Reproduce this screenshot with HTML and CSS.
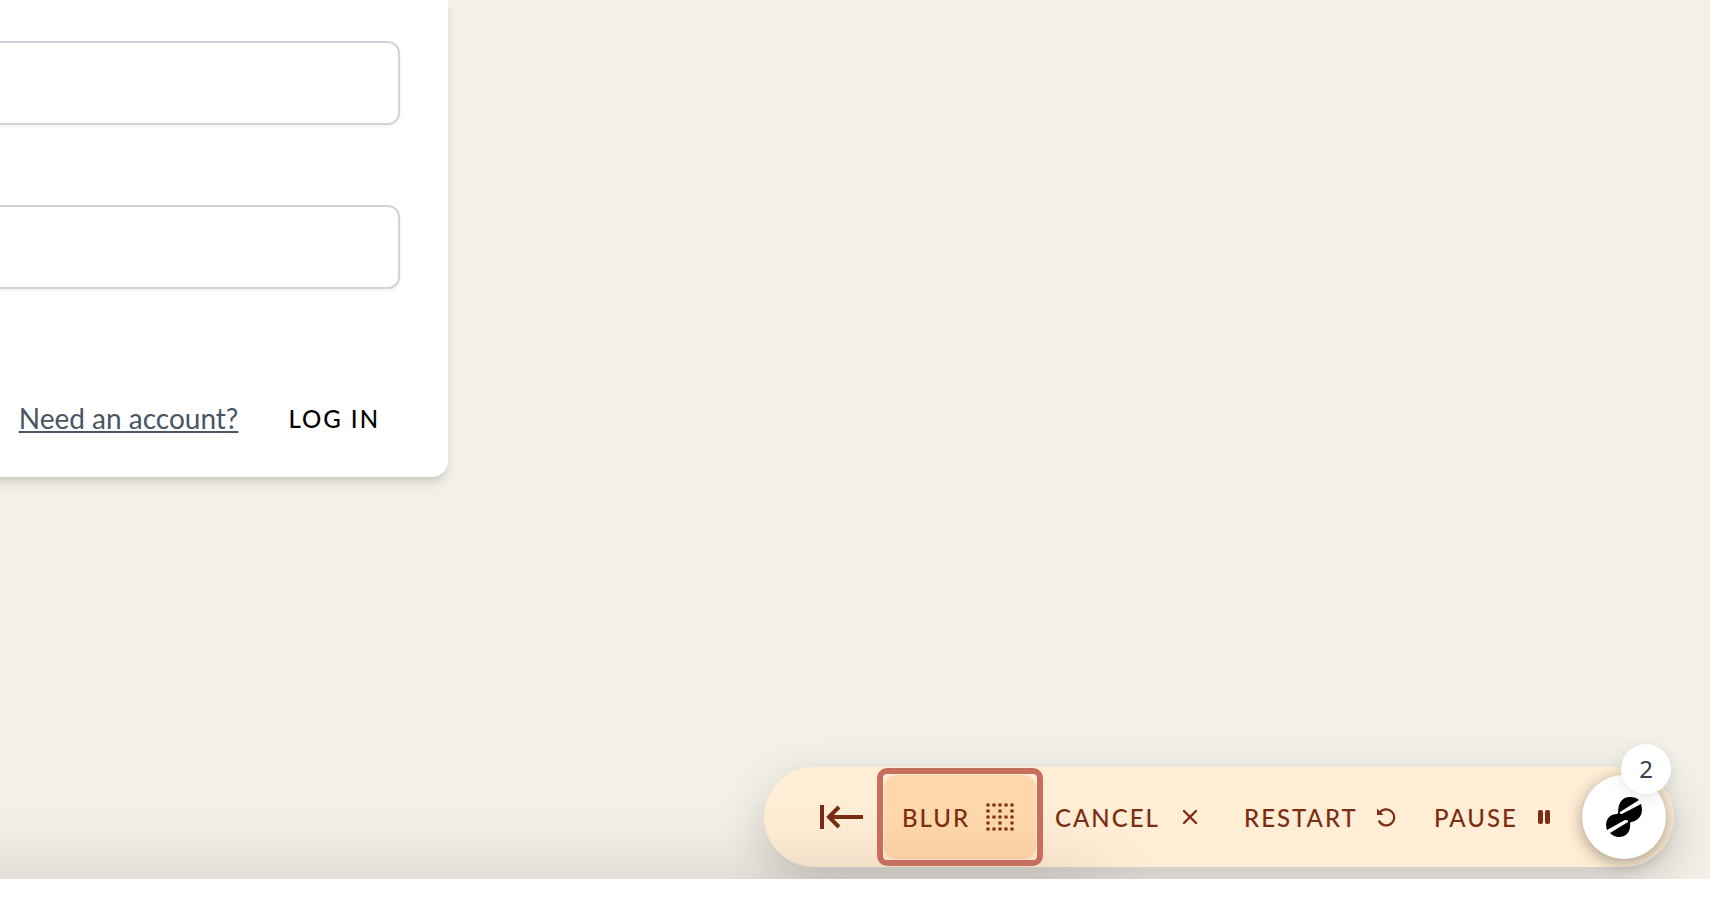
FILE: index.html
```
<!DOCTYPE html>
<html lang="en">
<head>
	<meta charset="UTF-8">
	<title>Log in</title>
	<link rel="stylesheet" href="styles.css">
</head>
<body>
<div class="stage">
	<main class="card">
		<form class="login">
			<input class="field" type="email" aria-label="Email">
			<input class="field" type="password" aria-label="Password">
			<div class="actions">
				<a class="need-account" href="#">Need an account?</a>
				<button class="log-in" type="button">LOG IN</button>
			</div>
		</form>
	</main>

	<div class="toolbar">
		<button class="tool collapse" type="button" aria-label="Collapse">
			<svg width="44" height="24" viewBox="0 0 44 24" fill="none" stroke="currentColor" stroke-width="4">
				<path d="M2 0v24M43 12H9M19 2L9 12l10 10"/>
			</svg>
		</button>
		<div class="highlight">
			<button class="tool blur" type="button">BLUR
				<svg width="28" height="28" viewBox="0 0 28 28" fill="none" stroke="currentColor" stroke-width="3.200">
					<path stroke-dasharray="3.200 2.800" d="M.400 2H28M.400 14H28M.400 26H28"/>
					<path d="M.400 8h3.200M12.400 8h3.200M24.400 8h3.200M.400 20h3.200M12.400 20h3.200M24.400 20h3.200"/>
				</svg>
			</button>
		</div>
		<button class="tool cancel" type="button">CANCEL
			<svg width="16" height="16" viewBox="0 0 16 16" fill="none" stroke="currentColor" stroke-width="2.400" stroke-linecap="round">
				<path d="M2 2l12 12M14 2L2 14"/>
			</svg>
		</button>
		<button class="tool restart" type="button">RESTART
			<svg width="20" height="20" viewBox="0 0 20 20" fill="none" stroke="currentColor" stroke-width="2.200">
				<path d="M3.500 6A8 8 0 1 1 2.800 13.500"/>
				<path d="M1 1.500V8h6.500z" fill="currentColor" stroke="none"/>
			</svg>
		</button>
		<button class="tool pause" type="button">PAUSE
			<svg width="12" height="14" viewBox="0 0 12 14" fill="currentColor">
				<rect width="5" height="14" rx="2"/><rect x="7" width="5" height="14" rx="2"/>
			</svg>
		</button>
		<button class="brand" type="button" aria-label="Recorder, 2 steps">
			<svg width="36" height="42" viewBox="0 0 36 42">
				<path d="M12 17C12 7 16 1 24 1C28 1 31 2 33 4L14 16Q13 18 16 18L35 8C38 17 34 24 25 26L24 27C25 36 20 41 13 41C9 41 6 39 4 37L22 26Q23 24 19 24L1 34C-2 25 3 18 11 18Z"/>
			</svg>
			<span class="count">2</span>
		</button>
	</div>
</div>
</body>
</html>
```
FILE: styles.css
```
* { box-sizing:border-box; }
body { margin:0; background:#fff; font-family:Lato, "Open Sans", sans-serif; }
button { border:0; background:none; padding:0; color:inherit; font:inherit; cursor:pointer; }

.stage {
	display:flex;
	flex-direction:column;
	justify-content:space-between;
	position:relative;
	min-height:calc(100vh - 23px);
	background:#f3f0e8;
	overflow:hidden;
}
/* soft shade along the bottom edge, falls over the toolbar too */
.stage:after {
	content:"";
	position:absolute;
	top:100%;
	left:-10%;
	right:36%;
	height:80px;
	box-shadow:0 0 80px rgba(0,0,0,.15);
	pointer-events:none;
}
.card {
	width:calc(26.2% + 24px);
	margin-left:-24px;
	padding:41px 48px 24px 0;
	background:#fff;
	border-radius:0 0 16px 16px;
	box-shadow:0 8px 12px -2px rgba(0,0,0,.1), 0 4px 8px -2px rgba(0,0,0,.08);
}
.login { display:flex; flex-direction:column; gap:80px; }
.field {
	width:100%;
	height:84px;
	padding:0 24px;
	border:2px solid #d1d5db;
	border-radius:12px;
	box-shadow:0 2px 4px rgba(0,0,0,.05);
	font-size:28px;
}
.actions { display:flex; align-items:center; justify-content:flex-end; gap:50px; height:84px; padding-top:14px; }
.need-account { color:#4b5563; font-size:28px; text-underline-offset:2px; }
.log-in { padding-right:20px; font-size:24px; font-weight:500; letter-spacing:2px; color:#000; }

.toolbar {
	display:flex;
	align-items:center;
	align-self:flex-end;
	height:100px;
	margin:0 36px 12px 0;
	padding:0 8px 0 56px;
	border-radius:50px;
	background:#ffedd5;
	color:#7c2d12;
	font-size:24px;
	font-weight:500;
	box-shadow:0 16px 48px rgba(0,0,0,.18);
}
.tool { display:flex; align-items:center; justify-content:space-between; height:84px; letter-spacing:2px; }
.collapse { margin-right:13px; }
.highlight { position:relative; z-index:1; padding:1px; border:6px solid #c76f5d; border-radius:10px; }
.blur { width:152px; padding:0 22px 0 18px; border-radius:12px; background:linear-gradient(#fed7aa 50%, #f6cea2); }
.cancel { width:143px; margin-left:12px; }
.restart { width:152px; margin-left:46px; }
.pause { width:116px; margin:0 32px 0 38px; }
.brand {
	display:flex;
	align-items:center;
	justify-content:center;
	position:relative;
	width:84px;
	height:84px;
	border-radius:50%;
	background:#fff;
	box-shadow:0 4px 16px rgba(0,0,0,.35);
}
.count {
	position:absolute;
	top:-31px;
	right:-5px;
	width:50px;
	height:50px;
	border-radius:50%;
	background:#fff;
	color:#374151;
	font-family:"Noto Sans", sans-serif;
	font-size:24px;
	font-weight:400;
	line-height:50px;
	box-shadow:0 4px 16px rgba(0,0,0,.1);
}
```
